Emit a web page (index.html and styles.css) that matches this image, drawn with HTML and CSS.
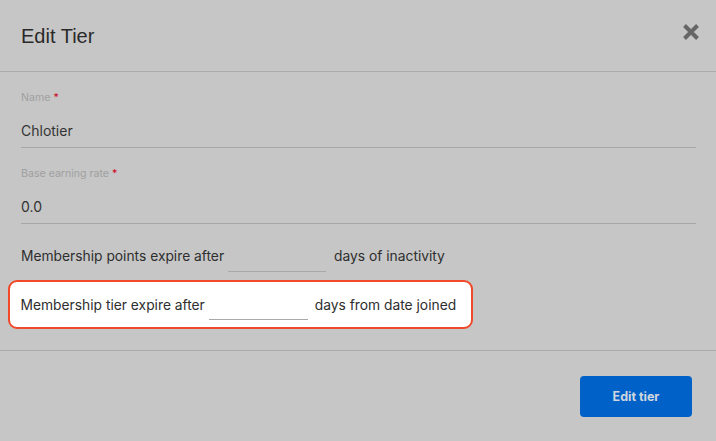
FILE: index.html
```html
<!DOCTYPE html>
<html>
<head>
<meta charset="utf-8">
<link rel="stylesheet" href="styles.css">
</head>
<body>
<div class="modal">
  <div class="header">
    <h1 class="title">Edit Tier</h1>
    <button class="close" aria-label="Close">
      <svg width="18" height="18" viewBox="0 0 18 18"><path d="M2.5 2.5 L15.5 15.5 M15.5 2.5 L2.5 15.5" stroke="#666" stroke-width="4" stroke-linecap="butt"/></svg>
    </button>
  </div>
  <div class="body">
    <div class="field">
      <div class="label">Name <span class="req">*</span></div>
      <div class="value">Chlotier</div>
    </div>
    <div class="field">
      <div class="label">Base earning rate <span class="req">*</span></div>
      <div class="value">0.0</div>
    </div>
    <div class="inline-row">
      <span>Membership points expire after</span>
      <span class="blank"></span>
      <span>days of inactivity</span>
    </div>
    <div class="inline-row highlight">
      <span>Membership tier expire after</span>
      <span class="blank"></span>
      <span>days from date joined</span>
    </div>
  </div>
  <div class="footer">
    <button class="btn">Edit tier</button>
  </div>
</div>
</body>
</html>
```

FILE: styles.css
```css
html, body {
  margin: 0;
  padding: 0;
  background: #c6c6c6;
  font-family: Inter, "Liberation Sans", sans-serif;
  color: #2e2e2e;
}
.modal {
  width: 716px;
  height: 441px;
}
.header {
  height: 72px;
  border-bottom: 1px solid #ababab;
  display: flex;
  align-items: center;
  justify-content: space-between;
  padding: 0 16px 0 21px;
  box-sizing: border-box;
}
.title {
  margin: 0;
  font-family: "Liberation Sans", sans-serif;
  font-weight: 400;
  font-size: 20px;
  color: #2a2a2a;
  position: relative;
  top: 1px;
}
.close {
  background: none;
  border: 0;
  padding: 0;
  width: 18px;
  height: 18px;
  position: relative;
  top: -4px;
}
.body {
  box-sizing: border-box;
  padding: 19px 20px 0 21px;
  height: 279px;
  border-bottom: 1px solid #ababab;
}
.field {
  margin-bottom: 19px;
}
.label {
  font-size: 10.6px;
  color: #a0a0a0;
  height: 14px;
  line-height: 14px;
}
.req {
  color: #d0021b;
}
.value {
  font-size: 14px;
  height: 26px;
  line-height: 26px;
  padding: 13px 0 3px;
  border-bottom: 1px solid #a6a6a6;
  color: #333;
}
.inline-row {
  display: flex;
  align-items: center;
  font-size: 13.8px;
  height: 26px;
}
.blank {
  display: inline-block;
  width: 98px;
  height: 28px;
  border-bottom: 1px solid #a9a9a9;
  margin: 0 8px 0 4px;
  align-self: flex-start;
}
.highlight {
  margin-left: -13px;
  width: 465px;
  box-sizing: border-box;
  height: 49px;
  margin-top: 11px;
  padding-left: 10.5px;
  background: #fff;
  border: 2.5px solid #f0492a;
  border-radius: 9px;
}
.highlight .blank {
  width: 99px;
  height: 37px;
  margin: 0 7px 0 4px;
}
.footer {
  display: flex;
  justify-content: flex-end;
  padding: 25px 24px 0 0;
}
.btn {
  width: 112px;
  height: 41px;
  background: #0062c9;
  color: #d0d6de;
  border: 0;
  border-radius: 4px;
  font-family: Inter, "Liberation Sans", sans-serif;
  font-weight: 700;
  font-size: 12.5px;
}
```
